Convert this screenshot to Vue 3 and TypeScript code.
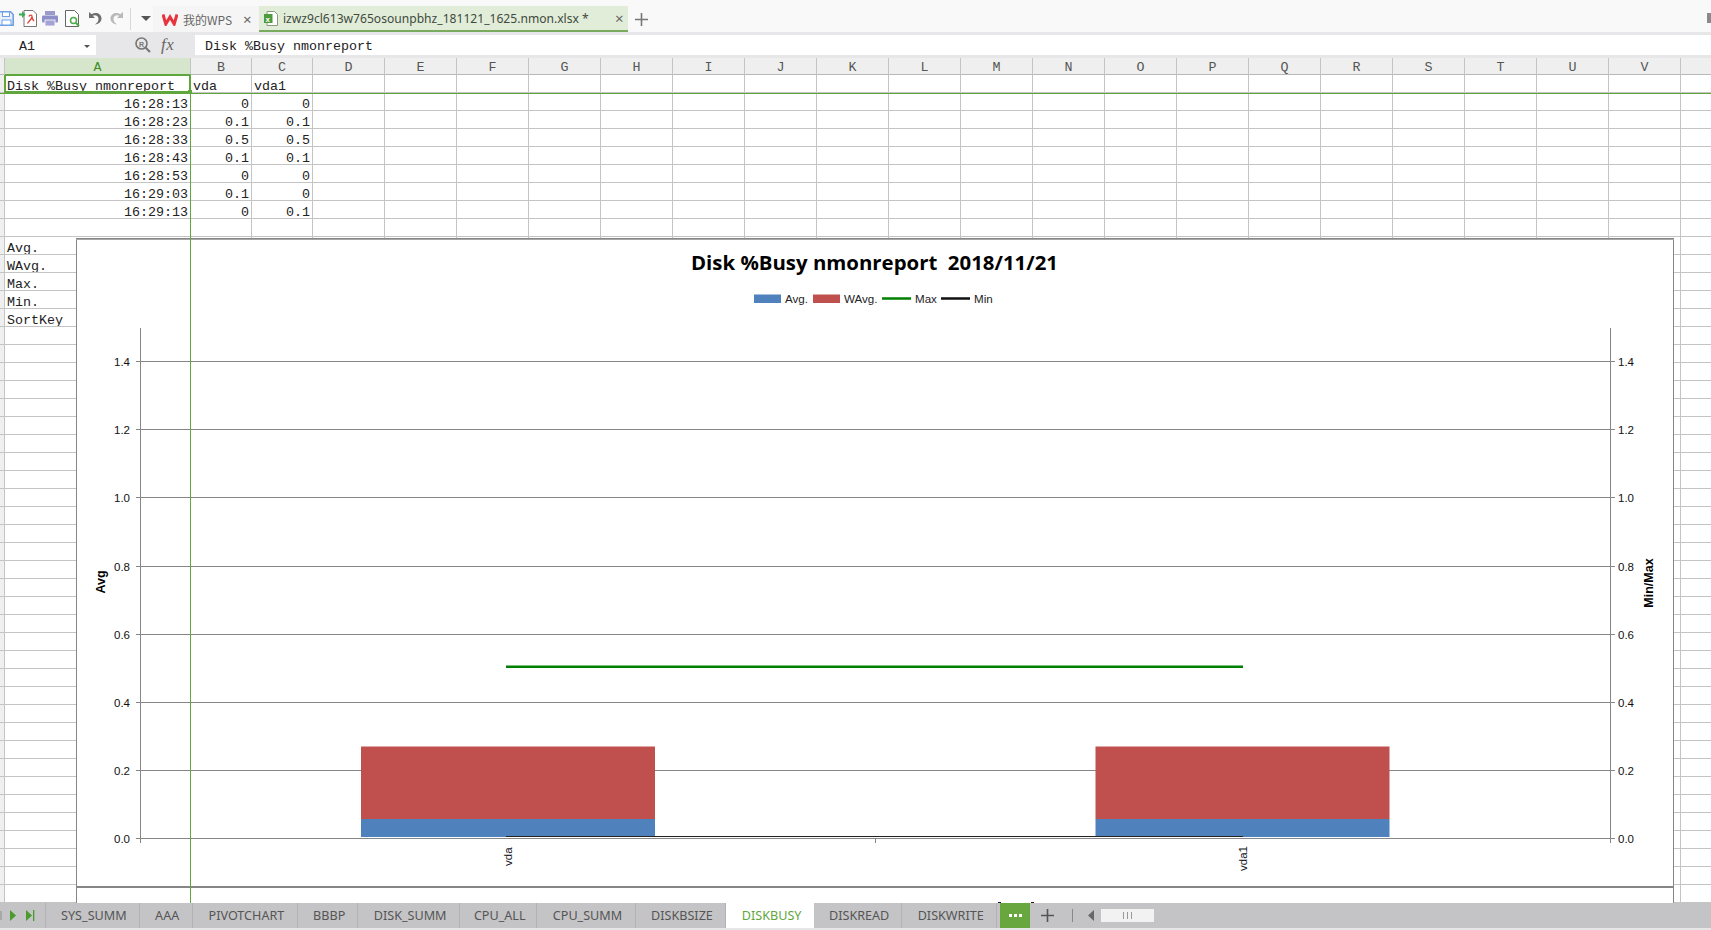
<script setup lang="ts">
const columnHeaders: { label: string; width: number }[] = [
  { label: 'A', width: 186 },
  { label: 'B', width: 61 },
  { label: 'C', width: 61 },
  ...'DEFGHIJKLMNOPQRSTUV'.split('').map((label) => ({ label, width: 72 })),
  { label: '', width: 72 }
]

const rowData: Record<number, string[]> = {
  0: ['Disk %Busy nmonreport', 'vda', 'vda1'],
  1: ['16:28:13', '0', '0'],
  2: ['16:28:23', '0.1', '0.1'],
  3: ['16:28:33', '0.5', '0.5'],
  4: ['16:28:43', '0.1', '0.1'],
  5: ['16:28:53', '0', '0'],
  6: ['16:29:03', '0.1', '0'],
  7: ['16:29:13', '0', '0.1'],
  9: ['Avg.'],
  10: ['WAvg.'],
  11: ['Max.'],
  12: ['Min.'],
  13: ['SortKey']
}
const rows = Array.from({ length: 46 }, (_, i) => i)
const cellText = (r: number, c: number): string => rowData[r]?.[c] ?? ''
const isRight = (r: number): boolean => r >= 1 && r <= 7

const sheets = [
  { name: 'SYS_SUMM', width: 93.7 },
  { name: 'AAA', width: 53 },
  { name: 'PIVOTCHART', width: 105.5 },
  { name: 'BBBP', width: 60 },
  { name: 'DISK_SUMM', width: 102 },
  { name: 'CPU_ALL', width: 77 },
  { name: 'CPU_SUMM', width: 98.6 },
  { name: 'DISKBSIZE', width: 90.4 },
  { name: 'DISKBUSY', width: 88, active: true },
  { name: 'DISKREAD', width: 88 },
  { name: 'DISKWRITE', width: 95 }
]

const chartTitle = 'Disk %Busy nmonreport  2018/11/21'
const zeroY = 838.3
const unit = 340.3
const ticks = [0, 0.2, 0.4, 0.6, 0.8, 1.0, 1.2, 1.4].map((v) => ({
  label: v.toFixed(1),
  y: Math.floor(zeroY - v * unit) + 0.5
}))
const bars = [361, 1095.5]
</script>

<template>
  <div class="app">
    <header class="titlebar">
      <div class="quick">
        <svg class="ic" width="14" height="15" viewBox="0 0 14 15">
          <path d="M-1 .8h11.500l2.700 2.700v10.700H-1z" fill="#e9f0fc" stroke="#6f9fe6" stroke-width="1.600" />
          <rect x="2.500" y="1" width="7" height="4.500" fill="#fff" stroke="#6f9fe6" />
          <rect x="2" y="9" width="9" height="5" fill="#fff" stroke="#6f9fe6" />
        </svg>
        <svg class="ic m5" width="18" height="17" viewBox="0 0 18 17">
          <path d="M5 .5h9l3.500 3.500v12.500H5z" fill="#fff" stroke="#777" />
          <path d="M0 3.500h3V1l3.500 3.500L3 8V5.500H0z" fill="#3eab55" />
          <path d="M8.500 13.500c1-2 4-4 4.500-6.500.4-2.200-2.500-2.500-3-.5M13 7c.5 2 1 3 2 4" fill="none" stroke="#e0413a" stroke-width="1.300" />
        </svg>
        <svg class="ic m5" width="16" height="15" viewBox="0 0 16 15">
          <rect x="3" y="0" width="10" height="4" fill="#9a9acb" />
          <rect x="0" y="4.500" width="16" height="7" rx="1" fill="#8f8fc8" />
          <rect x="3" y="9" width="10" height="6" fill="#a3a3d6" stroke="#fff" stroke-width=".8" />
        </svg>
        <svg class="ic m7" width="15" height="17" viewBox="0 0 15 17">
          <path d="M.5.500h9l4 4v12H.5z" fill="#fff" stroke="#666" />
          <circle cx="8.500" cy="10.500" r="3" fill="#fff" stroke="#4fa94a" stroke-width="1.500" />
          <path d="M11 13l3 3" stroke="#4fa94a" stroke-width="2" />
        </svg>
        <svg class="ic m8" width="14" height="15" viewBox="0 0 14 15">
          <path d="M1 1v6h6L4.800 4.800C7 3.500 10.500 4.500 10.500 8c0 2.500-1.500 4-3.500 5.500 4-.5 6.500-3 6.500-6 0-5-6-7-9.800-4.300z" fill="#6e6e6e" />
        </svg>
        <svg class="ic m8" width="14" height="15" viewBox="0 0 14 15">
          <path d="M13 1v6H7l2.200-2.200C7 3.500 3.500 4.500 3.500 8c0 2.500 1.500 4 3.500 5.500-4-.5-6.500-3-6.500-6 0-5 6-7 9.800-4.300z" fill="#b9b9b9" />
        </svg>
        <span class="vsep"></span>
        <span class="tri"></span>
      </div>
      <div class="tab home">
        <svg width="16" height="13" viewBox="0 0 16 13">
          <path d="M1 1.500l2.800 9.500 4.200-7 4.200 7L15 1.500" fill="none" stroke="#e8333c" stroke-width="3" />
        </svg>
        <span class="home-label">我的WPS</span>
        <span class="close">×</span>
      </div>
      <div class="tab doc">
        <svg width="14" height="15" viewBox="0 0 14 15">
          <path d="M3 .5h7.500l3 3v11H3z" fill="#fff" stroke="#8a9a80" />
          <rect x="0" y="3" width="8.500" height="9" fill="#4d9a3f" />
          <text x="1.600" y="10.500" class="xl">x</text>
        </svg>
        <span class="doc-label">izwz9cl613w765osounpbhz_181121_1625.nmon.xlsx *</span>
        <span class="close">×</span>
      </div>
      <span class="plus">
        <svg width="13" height="13" viewBox="0 0 13 13"><path d="M6.500 0v13M0 6.500h13" stroke="#777" stroke-width="1.600" /></svg>
      </span>
      <span class="blob"></span>
    </header>

    <section class="formula">
      <div class="namebox">
        <span class="name">A1</span>
        <span class="tri small"></span>
      </div>
      <svg class="lens" width="16" height="16" viewBox="0 0 16 16">
        <circle cx="6.500" cy="6.500" r="5.500" fill="none" stroke="#777" stroke-width="1.600" />
        <path d="M10.500 10.500l4.500 4.500" stroke="#777" stroke-width="2.200" />
        <text x="4" y="9.500" class="rmark">R</text>
      </svg>
      <span class="fx">fx</span>
      <div class="input">Disk %Busy nmonreport</div>
    </section>

    <section class="sheet">
      <div class="colhead">
        <span class="corner"></span>
        <span
          v-for="(col, i) in columnHeaders"
          :key="i"
          class="colcell"
          :class="{ on: col.label === 'A', blank: col.label === '' }"
          :style="{ width: col.width + 'px' }"
        >{{ col.label }}</span>
      </div>
      <div class="grid">
        <div v-for="r in rows" :key="r" class="row">
          <span class="rowhead"></span>
          <span
            v-for="(col, c) in columnHeaders"
            :key="c"
            class="cell"
            :class="{ right: isRight(r) }"
            :style="{ width: col.width + 'px' }"
          >{{ cellText(r, c) }}</span>
        </div>

        <div class="selected"><i class="handle"></i></div>

        <div class="chart">
          <svg width="1598" height="665" viewBox="76 238 1598 665" class="plot">
            <g class="gridlines">
              <line v-for="t in ticks" :key="t.label" x1="136" x2="1615" :y1="t.y" :y2="t.y" />
              <line x1="140.500" x2="140.500" y1="328" y2="843" />
              <line x1="1610.500" x2="1610.500" y1="328" y2="843" />
              <line x1="875.500" x2="875.500" y1="838" y2="843" />
            </g>
            <template v-for="x in bars" :key="x">
              <rect :x="x" y="746.500" width="294" height="72.500" fill="#c0504d" />
              <rect :x="x" y="819" width="294" height="18" fill="#4f81bd" />
            </template>
            <line x1="506" x2="1243" y1="666.700" y2="666.700" stroke="#008000" stroke-width="2.500" />
            <line x1="506" x2="1243" y1="836.500" y2="836.500" stroke="#222" stroke-width="1" />
            <g class="axis-label">
              <text v-for="t in ticks" :key="t.label" x="114" :y="t.y + 4">{{ t.label }}</text>
              <text v-for="t in ticks" :key="'r' + t.label" x="1618" :y="t.y + 4">{{ t.label }}</text>
            </g>
            <text class="chart-title" x="874.500" y="270" text-anchor="middle">{{ chartTitle }}</text>
            <rect x="754" y="294.500" width="27" height="8.500" fill="#4f81bd" />
            <text class="legend" x="785" y="303">Avg.</text>
            <rect x="813" y="294.500" width="27" height="8.500" fill="#c0504d" />
            <text class="legend" x="844" y="303">WAvg.</text>
            <line x1="882" x2="911" y1="298.500" y2="298.500" stroke="#008000" stroke-width="2.500" />
            <text class="legend" x="915" y="303">Max</text>
            <line x1="941" x2="970" y1="298.500" y2="298.500" stroke="#111" stroke-width="2.500" />
            <text class="legend" x="974" y="303">Min</text>
            <text class="axis-title" transform="translate(105 582) rotate(-90)" text-anchor="middle">Avg</text>
            <text class="axis-title" transform="translate(1653 583) rotate(-90)" text-anchor="middle">Min/Max</text>
            <text class="cat" transform="translate(512 866) rotate(-90)">vda</text>
            <text class="cat" transform="translate(1247 871) rotate(-90)">vda1</text>
            <line x1="76" x2="1673" y1="887" y2="887" stroke="#868686" stroke-width="2" />
            <rect x="998" y="902" width="3" height="1" fill="#113" />
            <rect x="1031" y="902" width="3" height="1" fill="#311" />
          </svg>
        </div>

        <span class="freeze-v"></span>
        <span class="freeze-h"></span>
      </div>
    </section>

    <footer class="tabs">
      <div class="nav">
        <span class="nav-stub"></span>
        <svg width="7" height="11" viewBox="0 0 7 11" style="margin-left:8px"><path d="M0 0l6 5.500-6 5.500z" fill="#4a9a2e" /></svg>
        <svg width="9" height="11" viewBox="0 0 9 11" style="margin-left:9px"><path d="M0 0l6 5.500-6 5.500zM7 0h1.300v11H7z" fill="#4a9a2e" /></svg>
      </div>
      <span
        v-for="s in sheets"
        :key="s.name"
        class="sheet-tab"
        :class="{ active: s.active }"
        :style="{ width: s.width + 'px' }"
      >{{ s.name }}</span>
      <span class="more"><i></i><i></i><i></i></span>
      <svg class="addsheet" width="13" height="13" viewBox="0 0 13 13"><path d="M6.500 0v13M0 6.500h13" stroke="#555" stroke-width="1.600" /></svg>
      <span class="tabsep"></span>
      <svg class="scrollarrow" width="6" height="11" viewBox="0 0 6 11"><path d="M6 0L0 5.500 6 11z" fill="#666" /></svg>
      <div class="thumb"><b></b><b></b><b></b></div>
    </footer>
    <div class="baseline"></div>
  </div>
</template>

<style scoped>
.app {
  width: 1711px;
  height: 930px;
  display: flex;
  flex-direction: column;
  overflow: hidden;
  background: #fff;
  font-family: "Liberation Mono", monospace;
  color: #222;
}
.titlebar {
  height: 32px;
  flex: none;
  display: flex;
  align-items: flex-end;
  background: #f9f9f9;
  position: relative;
}
.quick {
  width: 153px;
  height: 32px;
  display: flex;
  align-items: center;
  padding-top: 5px;
  box-sizing: border-box;
}
.ic {
  flex: none;
}
.m5 {
  margin-left: 5px;
}
.m7 {
  margin-left: 7px;
}
.m8 {
  margin-left: 8px;
}
.vsep {
  width: 1px;
  height: 22px;
  background: #d8d8d8;
  margin-left: 6px;
}
.tri {
  width: 0;
  height: 0;
  border-left: 5px solid transparent;
  border-right: 5px solid transparent;
  border-top: 5px solid #555;
  margin-left: 10px;
}
.tri.small {
  border-left-width: 3px;
  border-right-width: 3px;
  border-top-width: 3px;
  margin: 0;
}
.tab {
  height: 26px;
  display: flex;
  align-items: center;
  box-sizing: border-box;
  font-family: "Noto Sans", sans-serif;
  font-size: 12px;
  color: #555;
}
.tab.home {
  width: 106px;
  padding-left: 9px;
  background: #f5f5f5;
}
.home-label {
  margin-left: 5px;
  width: 60px;
  font-family: "Noto Sans CJK SC", "Noto Sans", sans-serif;
  white-space: nowrap;
  color: #666;
}
.tab.doc {
  width: 369px;
  padding-left: 5px;
  background: #e2edd9;
  border-bottom: 2px solid #79ab5f;
  color: #3d4a3d;
}
.doc-label {
  margin-left: 5px;
  width: 332px;
  white-space: nowrap;
  font-size: 12.1px;
}
.xl {
  font: bold 8px "Liberation Sans", sans-serif;
  fill: #fff;
}
.close {
  font-size: 15px;
  line-height: 1;
  color: #666;
}
.plus {
  height: 26px;
  display: flex;
  align-items: center;
  margin-left: 7px;
}
.blob {
  position: absolute;
  right: 0;
  top: 13px;
  width: 4px;
  height: 10px;
  background: #8a8a8a;
}
.formula {
  height: 26px;
  flex: none;
  box-sizing: border-box;
  padding: 3px 0;
  display: flex;
  align-items: stretch;
  background: #e7e7e9;
}
.namebox {
  width: 96px;
  background: #fff;
  display: flex;
  align-items: center;
  box-sizing: border-box;
  padding: 2px 6px 0 19px;
  justify-content: space-between;
}
.name {
  font-size: 13.33px;
}
.lens {
  margin: 2px 0 0 39px;
  flex: none;
}
.rmark {
  font: bold 7px "Liberation Sans", sans-serif;
  fill: #777;
}
.fx {
  width: 34px;
  margin-left: 10px;
  font: italic 17px/20px "Liberation Serif", serif;
  color: #666;
  letter-spacing: 0.5px;
}
.input {
  flex: 1;
  background: #fff;
  padding-left: 10px;
  font-size: 13.33px;
  line-height: 23px;
  white-space: pre;
}
.sheet {
  flex: 1;
  min-height: 0;
  display: flex;
  flex-direction: column;
}
.colhead {
  height: 17px;
  flex: none;
  display: flex;
  background: #efefef;
}
.corner {
  width: 5px;
  flex: none;
  background: #efefef;
  border-bottom: 1px solid #bbb;
  border-right: 1px solid #c4c4c4;
  box-sizing: border-box;
}
.colcell {
  flex: none;
  box-sizing: border-box;
  background: #efefef;
  border-right: 1px solid #c4c4c4;
  border-bottom: 1px solid #b8b8b8;
  text-align: center;
  font-size: 13.33px;
  line-height: 20px;
  color: #555;
}
.colcell.on {
  background: #d6e6cd;
  color: #3f8f1f;
  border-bottom-color: #5fa63c;
}
.colcell.blank {
  border-right: 0;
}
.grid {
  position: relative;
  flex: 1;
  min-height: 0;
  overflow: hidden;
}
.row {
  height: 18px;
  display: flex;
}
.rowhead {
  width: 5px;
  flex: none;
  background: #efefef;
  border-bottom: 1px solid #c4c4c4;
  border-right: 1px solid #c4c4c4;
  box-sizing: border-box;
}
.cell {
  flex: none;
  box-sizing: border-box;
  height: 18px;
  border-right: 1px solid #c4c4c4;
  border-bottom: 1px solid #c4c4c4;
  padding: 0 2px;
  font-size: 13.33px;
  line-height: 23px;
  white-space: nowrap;
  overflow: hidden;
  color: #222;
}
.cell.right {
  text-align: right;
}
.selected {
  position: absolute;
  left: 4px;
  top: -1px;
  width: 187px;
  height: 19px;
  box-sizing: border-box;
  border: 2px solid #5fa63c;
}
.handle {
  position: absolute;
  right: -3px;
  bottom: -3px;
  width: 4px;
  height: 4px;
  background: #5fa63c;
}
.chart {
  position: absolute;
  left: 76px;
  top: 163px;
  width: 1598px;
  height: 665px;
  box-sizing: border-box;
  background: #fff;
  box-shadow: inset 0 1px 0 #868686, inset 0 2px 0 #a8a8a8, inset 1px 0 0 #868686, inset -1px 0 0 #868686;
}
.plot {
  display: block;
}
.gridlines line {
  stroke: #868686;
  stroke-width: 1;
}
.axis-label text {
  font: 11.5px "Liberation Sans", sans-serif;
  fill: #111;
}
.chart-title {
  font: 700 20.4px "Open Sans", sans-serif;
  fill: #000;
  white-space: pre;
}
.legend {
  font: 11.6px "Liberation Sans", sans-serif;
  fill: #222;
}
.axis-title {
  font: 700 12.5px "Liberation Sans", sans-serif;
  fill: #000;
}
.cat {
  font: 11.5px "Liberation Sans", sans-serif;
  fill: #112;
}
.freeze-v {
  position: absolute;
  left: 190px;
  top: 0;
  bottom: 0;
  width: 1px;
  background: #5fa63c;
}
.freeze-h {
  position: absolute;
  left: 0;
  right: 0;
  top: 18px;
  height: 1px;
  background: #5fa63c;
}
.tabs {
  height: 25px;
  flex: none;
  display: flex;
  align-items: stretch;
  background: #c4c4c6;
}
.nav {
  width: 46px;
  flex: none;
  box-sizing: border-box;
  display: flex;
  align-items: center;
  border-right: 1px solid #b2b2b4;
}
.nav-stub {
  width: 2px;
  height: 9px;
  background: #a8a8a8;
}
.sheet-tab {
  flex: none;
  box-sizing: border-box;
  padding-left: 3px;
  font-family: "Noto Sans", sans-serif;
  font-size: 12.6px;
  line-height: 25px;
  text-align: center;
  white-space: nowrap;
  color: #555;
  border-right: 1px solid #b2b2b4;
}
.sheet-tab.active {
  background: #fff;
  color: #5fa63c;
  border-right: 0;
}
.more {
  width: 30px;
  margin-left: 3px;
  flex: none;
  background: #67a73e;
  display: flex;
  align-items: center;
  justify-content: center;
  gap: 2px;
}
.more i {
  width: 3px;
  height: 3px;
  background: #fff;
}
.addsheet {
  margin: 6px 0 0 11px;
  flex: none;
}
.tabsep {
  width: 1px;
  height: 13px;
  background: #888;
  margin: 6px 0 0 18px;
}
.scrollarrow {
  margin: 7px 0 0 15px;
  flex: none;
}
.thumb {
  width: 53px;
  height: 13px;
  margin: 6px 0 0 7px;
  background: #f2f2f2;
  display: flex;
  align-items: center;
  justify-content: center;
  gap: 3px;
}
.thumb b {
  width: 1px;
  height: 7px;
  background: #999;
}
.baseline {
  height: 2px;
  flex: none;
  background: #e6e6e8;
}
</style>
